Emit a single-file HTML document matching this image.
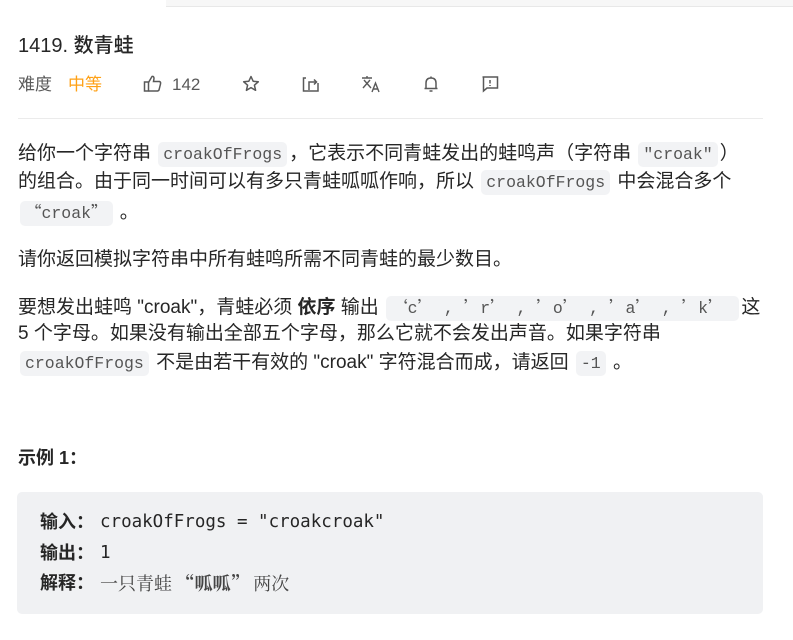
<!DOCTYPE html>
<html><head><meta charset="utf-8">
<style>
*{margin:0;padding:0;box-sizing:border-box}
body{width:793px;height:640px;overflow:hidden;background:#fff;position:relative;font-family:"Liberation Sans","Noto Sans CJK SC",sans-serif;color:#262626}
.abs{position:absolute;white-space:nowrap}
.ln{position:absolute;left:18px;white-space:nowrap;font-size:19px;line-height:24px;color:#262626}
code{font-family:"Liberation Mono","Noto Sans CJK SC",monospace;font-size:16.5px;background:#f2f3f5;color:#555;border-radius:5px;padding:3px 5px;margin:0 2px}
.q{font-family:"Noto Sans CJK SC",sans-serif}
.ic{position:absolute;top:74px}
</style></head><body>
<div class="abs" style="left:166px;top:0;width:627px;height:7px;background:#f7f7f7;border-bottom:1px solid #e8e8e8"></div>
<div class="abs" style="left:18px;top:33px;font-size:20px;font-weight:500;line-height:26px">1419. 数青蛙</div>
<div class="abs" style="left:18px;top:74px;font-size:17px;line-height:22px;color:#595959">难度</div>
<div class="abs" style="left:68px;top:74px;font-size:17px;line-height:22px;color:#ffa116">中等</div>
<svg class="ic" style="left:143px" width="20" height="20" viewBox="0 0 20 20" fill="none" stroke="#595959" stroke-width="1.5"><rect x="1.5" y="8" width="4" height="9"/><path d="M5.5 8.5 L9 2.5 Q11 2 11 4.5 L10.5 7.5 H16.5 Q18 8 17.5 10 L16 16 Q15.5 17 14 17 H5.5"/></svg>
<div class="abs" style="left:172px;top:74px;font-size:17px;line-height:22px;color:#595959">142</div>
<svg class="ic" style="left:241px" width="20" height="20" viewBox="0 0 20 20" fill="none" stroke="#595959" stroke-width="1.5" stroke-linejoin="round"><path d="M10 2.5 L12.2 7.3 L17.3 7.8 L13.4 11.2 L14.6 16.3 L10 13.6 L5.4 16.3 L6.6 11.2 L2.7 7.8 L7.8 7.3 Z"/></svg>
<svg class="ic" style="left:301px" width="20" height="20" viewBox="0 0 20 20" fill="none" stroke="#595959" stroke-width="1.5"><path d="M5 4 H2.5 V17 H17 V9"/><path d="M8 16 V8 H15"/><path d="M13 5.5 L15.5 8 L13 10.5"/></svg>
<svg class="ic" style="left:360px" width="22" height="20" viewBox="0 0 22 20" fill="none" stroke="#595959" stroke-width="1.4"><path d="M2 4 H12 M7 2 V4 M4 6 L11 14 M10 6 L3 14"/><path d="M12 18 L15.5 9 L19 18 M13.3 15 H17.7"/></svg>
<svg class="ic" style="left:421px" width="20" height="20" viewBox="0 0 20 20" fill="none" stroke="#595959" stroke-width="1.5"><path d="M5 14 V9 Q5 4 10 4 Q15 4 15 9 V14 M3.5 14.5 H16.5 M10 2.5 V4"/><path d="M8.5 17 H11.5"/></svg>
<svg class="ic" style="left:480px" width="20" height="20" viewBox="0 0 20 20" fill="none" stroke="#595959" stroke-width="1.5"><path d="M2.5 3 H17.5 V14 H7 L3.5 17 V3 Z"/><path d="M10 6 V9.5 M10 11 V12"/></svg>
<div class="abs" style="left:18px;top:118px;width:745px;height:1px;background:#ebebeb"></div>

<div class="ln" style="top:142px">给你一个字符串 <code>croakOfFrogs</code>，它表示不同青蛙发出的蛙鸣声（字符串 <code>″croak″</code>）</div>
<div class="ln" style="top:170px">的组合。由于同一时间可以有多只青蛙呱呱作响，所以 <code>croakOfFrogs</code> 中会混合多个</div>
<div class="ln" style="top:199px"><code><span class="q">“</span>croak<span class="q">”</span></code> 。</div>
<div class="ln" style="top:248px">请你返回模拟字符串中所有蛙鸣所需不同青蛙的最少数目。</div>
<div class="ln" style="top:294px">要想发出蛙鸣 "croak"，青蛙必须 <b>依序</b> 输出 <code><span class="q">‘</span>c<span class="q">’</span> , <span class="q">’</span>r<span class="q">’</span> , <span class="q">’</span>o<span class="q">’</span> , <span class="q">’</span>a<span class="q">’</span> , <span class="q">’</span>k<span class="q">’</span> </code> 这</div>
<div class="ln" style="top:322px">5 个字母。如果没有输出全部五个字母，那么它就不会发出声音。如果字符串</div>
<div class="ln" style="top:351px"><code>croakOfFrogs</code> 不是由若干有效的 "croak" 字符混合而成，请返回 <code>-1</code> 。</div>

<div class="abs" style="left:18px;top:446px;font-size:18px;line-height:24px;font-weight:bold">示例 1：</div>
<div class="abs" style="left:17px;top:492px;width:746px;height:122px;background:#f0f1f3;border-radius:5px"></div>
<div class="abs" style="left:40px;top:510px;font-size:18px;line-height:24px;font-weight:bold">输入：</div>
<div class="abs" style="left:100px;top:510px;font-family:'DejaVu Sans Mono',monospace;font-size:17.5px;line-height:24px">croakOfFrogs = "croakcroak"</div>
<div class="abs" style="left:40px;top:541px;font-size:18px;line-height:24px;font-weight:bold">输出：</div>
<div class="abs" style="left:100px;top:541px;font-family:'DejaVu Sans Mono',monospace;font-size:17.5px;line-height:24px">1</div>
<div class="abs" style="left:40px;top:571px;font-size:18px;line-height:24px;font-weight:bold">解释：</div>
<div class="abs" style="left:100px;top:571px;font-size:18px;line-height:24px;color:#444;font-family:'Noto Serif CJK SC',serif">一只青蛙 <b>“呱呱”</b> 两次</div>
</body></html>
